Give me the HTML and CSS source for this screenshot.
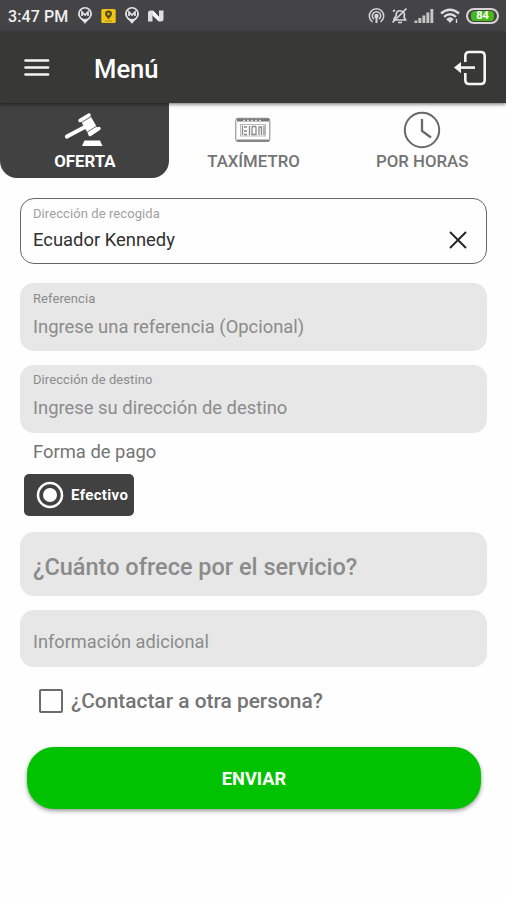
FILE: index.html
```html
<!DOCTYPE html>
<html lang="es">
<head>
<meta charset="utf-8">
<meta name="viewport" content="width=device-width, initial-scale=1">
<title>Menú</title>
<link rel="stylesheet" href="styles.css">
</head>
<body>
<div class="status">
  <span class="time">3:47 PM</span>
  <div class="notices">
    <svg width="16" height="18" viewBox="0 0 16 18"><path d="M8 17C6.500 14 1 11 1 7a7 7 0 0 1 14 0C15 11 9.500 14 8 17Z" fill="#e4e4e4"/><circle cx="8" cy="6.800" r="5.200" fill="#444446"/><path d="M5 9V5l3 3 3-3v4" fill="none" stroke="#e4e4e4" stroke-width="1.700"/></svg>
    <svg width="15" height="18" viewBox="0 0 15 18"><rect x=".3" y="2" width="14.400" height="14" rx="1.500" fill="#f0c414"/><path d="M7.500 12.500C7 10.500 4 9.300 4 6.900a3.500 3.500 0 0 1 7 0c0 2.400-3 3.600-3.500 5.600Z" fill="#514820"/><circle cx="7.500" cy="7" r="1.400" fill="#d2ac18"/><path d="M4 14h7" stroke="#a98b18"/></svg>
    <svg width="16" height="18" viewBox="0 0 16 18"><path d="M8 17C6.500 14 1 11 1 7a7 7 0 0 1 14 0C15 11 9.500 14 8 17Z" fill="#e4e4e4"/><circle cx="8" cy="6.800" r="5.200" fill="#444446"/><path d="M5 9V5l3 3 3-3v4" fill="none" stroke="#e4e4e4" stroke-width="1.700"/></svg>
    <svg width="16" height="18" viewBox="0 0 16 18"><path d="M0 14.500V5.500Q0 3.500 2.500 3.500H5L11 10V3.500h4.500v9q0 2-2.500 2h-2L4.500 8.500v6Z" fill="#dedede"/><path d="m5 3.500 6 6.500v4.500L5 8.500Z" fill="#fff"/></svg>
  </div>
  <div class="signals">
    <svg width="17" height="18" viewBox="0 0 17 18" fill="none" stroke="#d6d6d6" stroke-width="1.500"><path d="M4.500 15A7.200 7.200 0 1 1 12.500 15M6 12.200a4.200 4.200 0 1 1 5 0"/><circle cx="8.500" cy="9" r="1.500" fill="#d6d6d6"/><path d="M8.500 10v6" stroke-width="2"/></svg>
    <svg width="17" height="18" viewBox="0 0 17 18" fill="none" stroke="#d6d6d6" stroke-width="1.700"><path d="m3 12 2-3c0-4 2-6 5-5 3 0 4 3 3 6l1.500 3H3Z"/><path d="M15.500 1.500 1.500 15.500M7 15.500h4M2 4.500 4 3"/></svg>
    <svg width="20" height="18" viewBox="0 0 20 18" fill="#c6c6c6"><path d="M.5 13.500H3.300V16H.5zM4.400 11h2.900v5H4.400zM8.400 8.500h2.900V16H8.400zM12.400 5.500h2.900V16h-2.900zM16.400 2h2.900v14h-2.900z"/></svg>
    <svg width="20" height="18" viewBox="0 0 20 18" fill="none" stroke="#dedede" stroke-width="2.300"><path d="M1 6.500q9-7.500 18 0M4 9.800q6-5 12 0M7 12.800q3-2.500 6 0"/><path d="M7.500 13h5L10 16Z" fill="#dedede" stroke="none"/><path d="M16.500 12v4" stroke-width="1.300"/></svg>
    <span class="battery"><span class="charge">84</span></span>
  </div>
</div>
<header class="bar">
  <svg class="burger" width="26" height="20" viewBox="0 0 26 20"><path d="M1.500 2.500h22.500M1.500 9.500h22.500M1.500 16.500h22.500" stroke="#f4f4f2" stroke-width="2.700" stroke-linecap="round"/></svg>
  <h1>Menú</h1>
  <svg class="exit" width="34" height="36" viewBox="0 0 34 36" fill="none" stroke="#f6f6f4" stroke-width="2.600"><path d="M12.300 12V6Q12.300 2 16.300 2h11.400q4 0 4 4v24q0 4-4 4H16.300q-4 0-4-4v-7"/><path d="M6 17.600h16"/><path d="M1 17.600 8 12v11.200Z" fill="#f6f6f4" stroke="none"/></svg>
</header>
<nav class="tabs">
  <a class="tab active">
    <svg width="40" height="38" viewBox="0 -1 40 38" fill="#fff"><path d="m17 9.500 9.500-5.500 7.500 13-9.500 5.500Z"/><path d="m16 8.500 9-5.500M26 22.500l9-6" stroke="#fff" stroke-width="3.400" stroke-linecap="round"/><path d="m16 11.500 11-6.800M22.500 20.500l10.500-6.600" stroke="#414141" stroke-width=".8"/><path d="m3 24.500 17-9" stroke="#fff" stroke-width="4.200" stroke-linecap="round"/><path d="M20.500 28.500h15.500l2.500 5.500H18Z"/></svg>
    <span>OFERTA</span>
  </a>
  <a class="tab">
    <svg width="36" height="38" viewBox="0 0 36 38" fill="none" stroke="#858585"><rect x=".8" y="7.300" width="34" height="23.200" rx="2"/><path d="M2 9h32" stroke="#777" stroke-width="3"/><path d="M8 9.500h20" stroke="#ddd" stroke-width="1.500" stroke-dasharray="2 2"/><rect x="5.500" y="13.500" width="25" height="11.500" stroke="#bbb"/><path d="M7.500 14.500v9.500M9 16h3M9 20h3M9 23.500h3M14.500 15v9M17 15.500h4M17 15.500v8h4v-8M24 24v-8h2.500v8M29 14.500v9.500" stroke="#888" stroke-width="1.300"/><path d="M2 29.500h32" stroke="#858585" stroke-width="2"/></svg>
    <span>TAXÍMETRO</span>
  </a>
  <a class="tab">
    <svg width="38" height="38" viewBox="0 0 38 38" fill="none" stroke="#686868" stroke-width="2"><circle cx="19" cy="19" r="17.200"/><path d="M19 8v12l9 6.500" stroke-width="2.300"/></svg>
    <span>POR HORAS</span>
  </a>
</nav>
<main>
  <div class="field pickup">
    <div><span class="caption">Dirección de recogida</span><span class="value">Ecuador Kennedy</span></div>
    <svg width="20" height="20" viewBox="0 0 20 20"><path d="m2 2 16 16M18 2 2 18" stroke="#242424" stroke-width="1.900"/></svg>
  </div>
  <div class="field reference"><span class="caption">Referencia</span><span class="value">Ingrese una referencia (Opcional)</span></div>
  <div class="field destination"><span class="caption">Dirección de destino</span><span class="value">Ingrese su dirección de destino</span></div>
  <div class="pay-title">Forma de pago</div>
  <div class="cash"><svg width="28" height="28" viewBox="0 0 28 28"><circle cx="14" cy="14" r="12" fill="none" stroke="#fff" stroke-width="2.500"/><circle cx="14" cy="14" r="7" fill="#fff"/></svg><span>Efectivo</span></div>
  <div class="field offer">¿Cuánto ofrece por el servicio?</div>
  <div class="field info">Información adicional</div>
  <label class="contact"><span class="box"></span><span>¿Contactar a otra persona?</span></label>
  <button class="send"><span>ENVIAR</span></button>
</main>
</body>
</html>
```
FILE: styles.css
```css
* { box-sizing: border-box; }
body { margin: 0; width: 506px; height: 900px; overflow: hidden; background: #fefefe; font-family: Roboto, "Liberation Sans", sans-serif; color: #747474; }
svg { display: block; flex: none; }
.status { height: 32px; background: #444446; display: flex; align-items: center; justify-content: space-between; padding: 0 7px 0 8px; }
.time { color: #f0f0f0; font-size: 16px; font-weight: 500; line-height: 20px; width: 69px; white-space: nowrap; letter-spacing: .1px; padding-top: 1px; }
.notices { display: flex; gap: 8px; flex: 1; }
.signals { display: flex; align-items: center; gap: 6px; }
.battery { width: 33px; height: 16px; border: 2px solid #d4d4d4; border-radius: 8px; padding: 1px 3px; display: flex; }
.charge { flex: 1; background: #48b91a; border-radius: 4px; color: #fff; font-size: 11px; line-height: 10px; font-weight: 700; text-align: center; }
.bar { height: 71px; background: #383836; display: flex; align-items: center; padding: 0 19px 0 24px; position: relative; box-shadow: 0 1px 4px #0009; }
h1 { margin: 3px 0 0 44px; flex: 1; color: #fff; font-size: 25.600px; font-weight: 500; line-height: 32px; }
.exit { margin-top: 1px; }
.tabs { display: grid; grid-template-columns: repeat(3, 1fr); height: 75px; }
.tab { display: flex; flex-direction: column; align-items: center; padding-top: 8px; font-size: 16.800px; font-weight: 500; line-height: 20px; color: #747474; }
.tab span { margin: 2px 0 0 1px; }
.active { background: #414141; color: #fff; border-radius: 0 0 17px 17px; font-weight: 700; }
main { padding: 20px 19px 0 20px; display: flex; flex-direction: column; }
.field { background: #e7e7e7; border-radius: 14px; padding-left: 13px; color: #8b8b8b; }
.caption { display: block; font-size: 13px; line-height: 16px; letter-spacing: .08px; }
.value { display: block; font-size: 18.400px; line-height: 22px; width: max-content; }
.pickup { height: 66px; background: #fefefe; border: 1.500px solid #666; padding: 7px 18px 0 12px; display: flex; justify-content: space-between; }
.pickup .caption { color: #a0a0a0; }
.pickup .value { color: #303030; margin-top: 7px; }
.pickup svg { margin-top: 24px; }
.reference { height: 68px; margin-top: 19px; padding-top: 8px; }
.destination { height: 68px; margin-top: 14px; padding-top: 7px; }
.reference .value, .destination .value { margin-top: 9px; }
.pay-title { margin: 8px 0 0 13px; font-size: 18.400px; line-height: 22px; width: max-content; }
.cash { width: 110px; height: 42px; margin: 11px 0 0 4px; border-radius: 5px; background: #414141; color: #fff; display: flex; align-items: center; padding-left: 12px; gap: 7px; font-size: 15px; font-weight: 700; letter-spacing: .35px; }
.offer { height: 64px; margin-top: 16px; font-size: 23.500px; font-weight: 500; line-height: 71px; }
.info { height: 57px; margin-top: 14px; font-size: 18.200px; line-height: 63px; }
.contact { display: flex; align-items: center; margin: 21px 0 0 19px; height: 26px; gap: 8px; font-size: 20.900px; font-weight: 500; }
.box { width: 24px; height: 24px; border: 2px solid #6c6c6c; border-radius: 2px; }
.send { width: 454px; height: 62px; margin: 33px 0 0 7px; border: 0; border-radius: 27px; background: #00c200; color: #fff; font: 700 18.200px/22px Roboto, sans-serif; box-shadow: 0 2px 4px #0006; }
.send span { position: relative; top: 1px; }
```
